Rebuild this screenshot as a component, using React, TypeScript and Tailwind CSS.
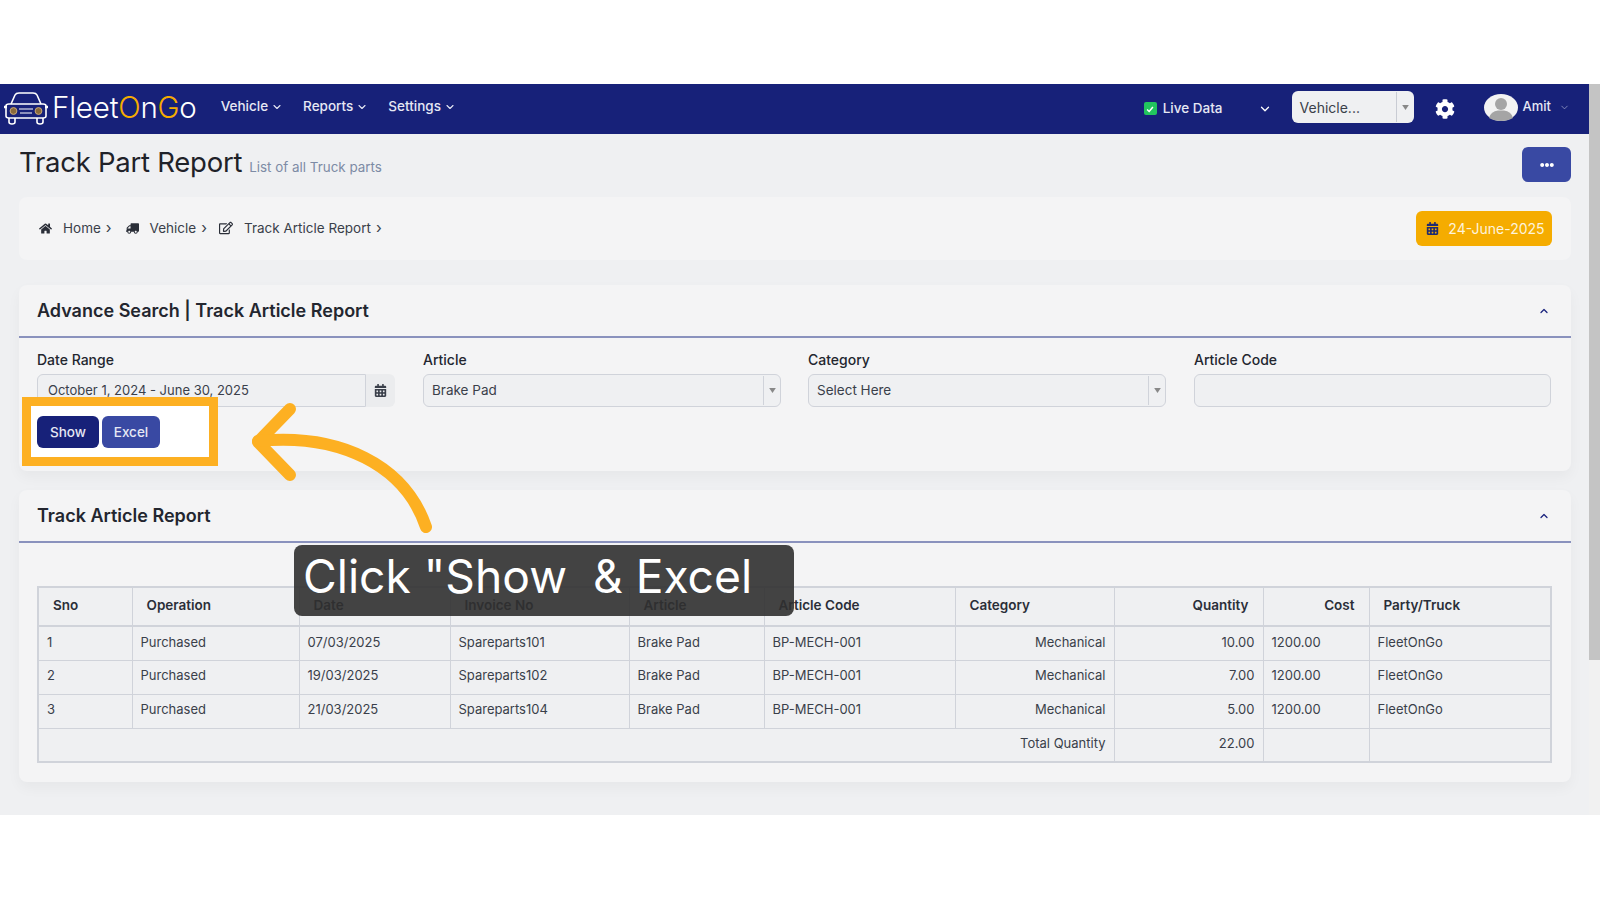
import { ChevronDown, ChevronUp } from 'lucide-react'
import { FaHome, FaTruck, FaRegEdit, FaCalendarAlt, FaCog, FaEllipsisH } from 'react-icons/fa'

const rows = [
  { sno: 1, date: '07/03/2025', invoice: 'Spareparts101', qty: '10.00' },
  { sno: 2, date: '19/03/2025', invoice: 'Spareparts102', qty: '7.00' },
  { sno: 3, date: '21/03/2025', invoice: 'Spareparts104', qty: '5.00' },
]

const navItems = ['Vehicle', 'Reports', 'Settings']

const cell = 'border border-[#d0d3da] px-2 pb-[2px] text-[13px] text-[#3a3f4a]'
const head = 'border border-[#d0d3da] border-b-2 px-[14px] pb-[2px] text-left text-[13.5px] font-semibold text-[#2a2e38]'

function CarLogo() {
  return (
    <svg viewBox="0 0 46 34" className="h-[34px] w-[46px]" fill="none" stroke="#fff" strokeWidth="1.6">
      <path d="M8 13 L12 4 Q13 2 16 2 H30 Q33 2 34 4 L38 13" />
      <path d="M3 15 Q3 13 6 13 H40 Q43 13 43 15 V25 Q43 27 40 27 H6 Q3 27 3 25 Z" />
      <path d="M1 16 H4 M42 16 H45" strokeWidth="2.4" />
      <path d="M6 27 V31 Q6 33 9 33 Q12 33 12 31 V27 M34 27 V31 Q34 33 37 33 Q40 33 40 31 V27" />
      <circle cx="10.5" cy="20" r="3.4" fill="#8a6a3a" stroke="#c9a877" strokeWidth="1" />
      <circle cx="35.5" cy="20" r="3.4" fill="#8a6a3a" stroke="#c9a877" strokeWidth="1" />
      <path d="M16 18 H30 M17 22 H29" strokeWidth="1.2" />
    </svg>
  )
}

function SelectArrow() {
  return (
    <svg viewBox="0 0 8 6" className="h-[5px] w-[7px]">
      <path d="M0 0 H8 L4 6 Z" fill="#888" />
    </svg>
  )
}

function Avatar() {
  return (
    <svg viewBox="0 0 34 27" className="h-[27px] w-[34px]">
      <ellipse cx="17" cy="13.5" rx="17" ry="13.5" fill="#f3f3f3" />
      <circle cx="17" cy="10" r="6" fill="#a5a5a5" />
      <path d="M5 24 Q7 17 14 16.5 H20 Q27 17 29 24 Q24 27 17 27 Q10 27 5 24 Z" fill="#a5a5a5" />
    </svg>
  )
}

function SectionHeader({ title }: { title: string }) {
  return (
    <div className="flex h-[53px] items-center justify-between border-b-2 border-[#8a92bd] pl-[18px] pr-[21px]">
      <h2 className="mb-[1px] text-[18px] font-semibold text-[#23262f]">{title}</h2>
      <ChevronUp size={12} strokeWidth={2.5} className="text-[#1a237e]" />
    </div>
  )
}

function FieldSelect({ value, className }: { value: string; className: string }) {
  return (
    <div className={`flex h-[33px] items-center rounded-md border border-[#d0d3da] bg-[#eff0f2] ${className}`}>
      <span className="flex-1 pl-2 text-[13.5px] text-[#3a3f4a]">{value}</span>
      <span className="flex h-[29px] w-[17px] items-center justify-center border-l border-[#d0d3da]">
        <SelectArrow />
      </span>
    </div>
  )
}

export default function App() {
  return (
    <div className="relative flex h-[900px] w-[1600px] flex-col overflow-hidden bg-white [font-family:Inter,sans-serif]">
      <div className="h-[84px]" />

      <div className="flex h-[731px]">
        <div className="flex w-[1589px] flex-col bg-[#eff0f2]">
          {/* Top nav */}
          <nav className="flex h-[50px] items-center bg-[#172179] text-white">
            <div className="mb-[3px] ml-[3px] flex items-center">
              <CarLogo />
              <span className="ml-[3px] text-[29.5px] font-light tracking-[-0.2px]">
                Fleet<span className="text-[#f5ac00]">O</span>n<span className="text-[#f5ac00]">G</span>o
              </span>
            </div>
            <div className="mb-[5px] ml-[24px] flex gap-[20px]">
              {navItems.map((item) => (
                <div key={item} className="flex items-center gap-[3px] text-[13.5px] font-medium text-[#e6e8f4]">
                  {item}
                  <ChevronDown size={12} strokeWidth={2.2} />
                </div>
              ))}
            </div>
            <div className="mb-[1px] ml-auto flex items-center">
              <span className="flex h-[13px] w-[13px] items-center justify-center rounded-[2px] bg-[#22c55e]">
                <svg viewBox="0 0 12 12" className="h-[10px] w-[10px]" fill="none" stroke="#fff" strokeWidth="1.8">
                  <path d="M2.5 6.5 L5 9 L9.5 3.5" />
                </svg>
              </span>
              <span className="ml-[6px] text-[13.5px] font-medium text-[#e6e8f4]">Live Data</span>
              <ChevronDown size={14} strokeWidth={2.2} className="ml-[35px]" />
              <div className="mb-[3px] ml-[20px] flex h-[32px] w-[122px] items-center rounded-md bg-[#eff0f2]">
                <span className="flex-1 pl-2 text-[14px] text-[#3a3f4a]">Vehicle...</span>
                <span className="flex h-[30px] w-[18px] items-center justify-center border-l border-[#c9ccd4]">
                  <SelectArrow />
                </span>
              </div>
              <FaCog size={20} className="ml-[21px]" />
              <span className="mb-[3px] ml-[29px]"><Avatar /></span>
              <span className="mb-[3px] ml-[5px] text-[13px] font-medium text-[#e6e8f4]">Amit</span>
              <ChevronDown size={11} strokeWidth={1.5} className="mb-[3px] ml-[8px] mr-[19px] text-[#aab0d4]" />
            </div>
          </nav>

          <main className="flex flex-1 flex-col pl-[19px] pr-[18px]">
            {/* Title */}
            <div className="flex h-[63px] items-start justify-between">
              <div className="mt-[8px] flex items-baseline gap-[7px]">
                <h1 className="text-[27.5px] font-normal tracking-[-0.25px] text-[#1f2229]">Track Part Report</h1>
                <span className="text-[13.4px] text-[#7d8ba5]">List of all Truck parts</span>
              </div>
              <button className="mt-[13px] flex h-[35px] w-[49px] items-center justify-center rounded-md bg-[#3949a3] text-white">
                <FaEllipsisH size={14} />
              </button>
            </div>

            {/* Breadcrumb */}
            <div className="flex h-[63px] items-center justify-between rounded-lg bg-[#f4f4f5] pl-[20px] pr-[19px] text-[13.5px] text-[#3a3f4a]">
              <div className="mb-[1px] flex items-center">
                <FaHome size={13} className="text-[#2a2e38]" />
                <span className="ml-[11px]">Home</span>
                <span className="ml-[5px] text-[15px]">&rsaquo;</span>
                <FaTruck size={13} className="ml-[14px] -scale-x-100 text-[#2a2e38]" />
                <span className="ml-[11px]">Vehicle</span>
                <span className="ml-[5px] text-[15px]">&rsaquo;</span>
                <FaRegEdit size={14} className="ml-[12px] text-[#2a2e38]" />
                <span className="ml-[11px]">Track Article Report</span>
                <span className="ml-[5px] text-[15px]">&rsaquo;</span>
              </div>
              <div className="flex h-[35px] w-[136px] items-center justify-center gap-[9px] rounded-md bg-[#f5ac00] pl-[3px] text-[14px] text-[#fdf3dc]">
                <FaCalendarAlt size={13} className="text-[#1f2a70]" />
                24-June-2025
              </div>
            </div>

            {/* Advance search */}
            <section className="mt-[25px] h-[186px] rounded-lg bg-[#f4f4f5] shadow-[0_6px_14px_rgba(0,0,0,0.04)]">
              <SectionHeader title="Advance Search | Track Article Report" />
              <div className="pl-[18px] pr-[19px] pt-[14px]">
                <div className="grid grid-cols-[359px_358px_359px_357px] gap-[27px] text-[14px] font-medium text-[#23262f]">
                  <div>
                    <label className="block h-[22px] leading-[16px]">Date Range</label>
                    <div className="flex h-[33px]">
                      <div className="flex w-[329px] items-center rounded-l-md border border-[#d0d3da] bg-[#eff0f2] pl-[10px] text-[13px] font-normal text-[#3a3f4a]">
                        October 1, 2024 - June 30, 2025
                      </div>
                      <div className="flex w-[29px] items-center justify-center rounded-r-md bg-[#ebecee]">
                        <FaCalendarAlt size={13} className="text-[#3a3f4a]" />
                      </div>
                    </div>
                  </div>
                  <div>
                    <label className="block h-[22px] leading-[16px]">Article</label>
                    <FieldSelect value="Brake Pad" className="font-normal" />
                  </div>
                  <div>
                    <label className="block h-[22px] leading-[16px]">Category</label>
                    <FieldSelect value="Select Here" className="w-[358px] font-normal" />
                  </div>
                  <div>
                    <label className="block h-[22px] leading-[16px]">Article Code</label>
                    <div className="h-[33px] rounded-md border border-[#d0d3da] bg-[#eff0f2]" />
                  </div>
                </div>

                <div className="relative mt-[9px] flex gap-[3px]">
                  <div className="absolute left-[-15px] top-[-19px] h-[69px] w-[196px] border-[9px] border-[#fdb022] bg-white" />
                  <button className="relative h-[32px] w-[62px] rounded-md bg-[#172179] text-[13.5px] font-medium text-[#e6e8f4]">Show</button>
                  <button className="relative h-[32px] w-[58px] rounded-md bg-[#3949a3] text-[13.5px] font-medium text-[#e6e8f4]">Excel</button>
                </div>
              </div>
            </section>

            {/* Report table */}
            <section className="mt-[19px] h-[292px] rounded-lg bg-[#f4f4f5] shadow-[0_6px_14px_rgba(0,0,0,0.04)]">
              <SectionHeader title="Track Article Report" />
              <div className="pl-[18px] pr-[20px] pt-[43px]">
                <table className="w-[1513px] table-fixed border-collapse border-2 border-[#d0d3da] bg-[#eff0f2]">
                  <colgroup>
                    <col className="w-[94px]" />
                    <col className="w-[167px]" />
                    <col className="w-[151px]" />
                    <col className="w-[179px]" />
                    <col className="w-[135px]" />
                    <col className="w-[191px]" />
                    <col className="w-[159px]" />
                    <col className="w-[149px]" />
                    <col className="w-[106px]" />
                    <col className="w-[182px]" />
                  </colgroup>
                  <thead>
                    <tr className="h-[39px]">
                      <th className={head}>Sno</th>
                      <th className={head}>Operation</th>
                      <th className={head}>Date</th>
                      <th className={head}>Invoice No</th>
                      <th className={head}>Article</th>
                      <th className={head}>Article Code</th>
                      <th className={head}>Category</th>
                      <th className={`${head} text-right`}>Quantity</th>
                      <th className={`${head} text-right`}>Cost</th>
                      <th className={head}>Party/Truck</th>
                    </tr>
                  </thead>
                  <tbody>
                    {rows.map((row) => (
                      <tr key={row.sno} className="h-[34px]">
                        <td className={cell}>{row.sno}</td>
                        <td className={cell}>Purchased</td>
                        <td className={cell}>{row.date}</td>
                        <td className={cell}>{row.invoice}</td>
                        <td className={cell}>Brake Pad</td>
                        <td className={cell}>BP-MECH-001</td>
                        <td className={`${cell} text-right`}>Mechanical</td>
                        <td className={`${cell} text-right`}>{row.qty}</td>
                        <td className={cell}>1200.00</td>
                        <td className={cell}>FleetOnGo</td>
                      </tr>
                    ))}
                    <tr className="h-[34px]">
                      <td colSpan={7} className={`${cell} text-right`}>Total Quantity</td>
                      <td className={`${cell} text-right`}>22.00</td>
                      <td className={cell} />
                      <td className={cell} />
                    </tr>
                  </tbody>
                </table>
              </div>
            </section>
          </main>
        </div>

        {/* Scrollbar */}
        <div className="flex w-[11px] flex-col bg-[#f1f1f1]">
          <div className="h-[576px] bg-[#c4c4c4]" />
        </div>
      </div>

      {/* Tutorial overlay */}
      <div className="absolute left-[294px] top-[545px] flex h-[71px] w-[500px] items-center rounded-lg bg-[#303030]/90 pb-[8px] pl-[9px] text-[46.2px] leading-none text-white">
        Click "Show&nbsp; &amp; Excel
      </div>
      <svg className="absolute left-0 top-0 h-[900px] w-[1600px]" viewBox="0 0 1600 900" fill="none" stroke="#fdb022" strokeWidth="12" strokeLinecap="round" strokeLinejoin="round">
        <path d="M290 409 L258 442 L290 475" />
        <path d="M258 441 C340 433 405 465 426 527" />
      </svg>
    </div>
  )
}
